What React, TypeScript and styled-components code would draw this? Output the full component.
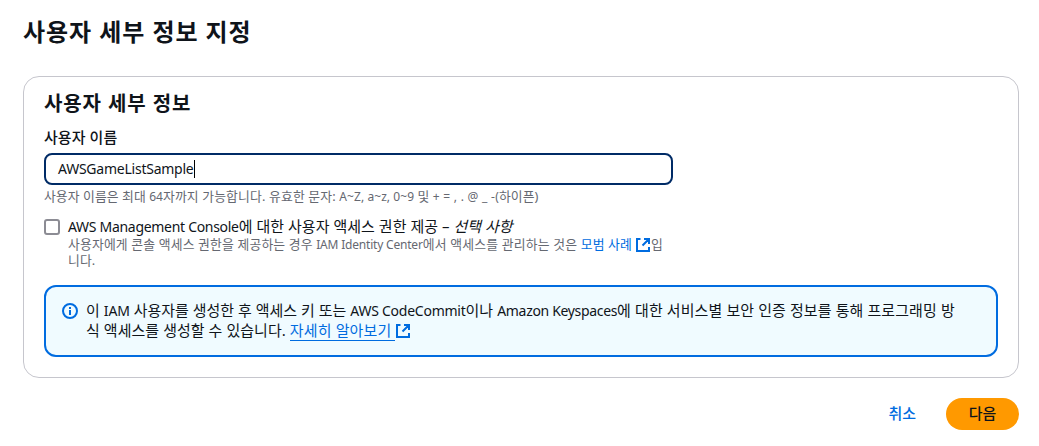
import React from 'react';
import styled, { createGlobalStyle } from 'styled-components';

const GlobalStyle = createGlobalStyle`
  * { box-sizing: border-box; }
  body {
    margin: 0;
    background: #fff;
    color: #0f141a;
    font: 14px/20px "Noto Sans", "Noto Sans CJK KR", sans-serif;
  }
`;

const Page = styled.main`
  width: 1039px;
  height: 446px;
  padding: 17px 20px 0 23px;
  overflow: hidden;
`;

const Run = styled.span<{ $ls?: number }>`
  letter-spacing: ${(p) => p.$ls ?? 0}px;
  white-space: nowrap;
`;

/* Hangul is set slightly larger than the Latin text around it. */
const Ko = styled(Run)<{ $italic?: boolean }>`
  font-size: 1.07em;
  line-height: 1;
  font-style: ${(p) => (p.$italic ? 'italic' : 'normal')};
`;

const Title = styled.h1`
  margin: 0 0 29px;
  height: 30px;
  font-size: 24px;
  line-height: 30px;
  font-weight: 700;
`;

const Card = styled.section`
  height: 302px;
  padding: 15px 20px 0;
  border: 1px solid #c6c6cd;
  border-radius: 16px;
`;

const CardTitle = styled.h2`
  margin: 0 0 12px;
  height: 24px;
  font-size: 20px;
  line-height: 24px;
  font-weight: 700;
`;

const FieldLabel = styled.label`
  display: block;
  height: 20px;
  margin-bottom: 5px;
  font-weight: 500;
`;

const InputBox = styled.div`
  display: flex;
  align-items: center;
  width: 629px;
  height: 32px;
  padding-left: 12px;
  border: 2px solid #002b66;
  border-radius: 8px;
`;

const Caret = styled.i`
  width: 1px;
  height: 18px;
  background: #000;
`;

const Hint = styled.p`
  margin: 4px 0 0;
  height: 16px;
  font-size: 12px;
  line-height: 16px;
  color: #656871;
`;

const CheckRow = styled.div`
  display: flex;
  gap: 8px;
  height: 52px;
  margin-top: 12px;
`;

const Checkbox = styled.span`
  width: 16px;
  height: 16px;
  margin-top: 2px;
  border: 2px solid #8c8c94;
  border-radius: 3px;
`;

const CheckLabel = styled.div`
  height: 20px;
`;

const CheckText = styled.div`
  font-size: 12px;
  line-height: 16px;
  color: #656871;
`;

const Link = styled.a<{ $underlined?: boolean }>`
  display: inline-block;
  height: ${(p) => (p.$underlined ? '19px' : 'auto')};
  padding-right: ${(p) => (p.$underlined ? '4px' : '3px')};
  color: #006ce0;
  white-space: nowrap;
  box-shadow: ${(p) => (p.$underlined ? '0 1px 0 #006ce0' : 'none')};
`;

const Alert = styled.div`
  display: flex;
  gap: 8px;
  height: 72px;
  margin-top: 16px;
  padding: 14px 16px;
  border: 2px solid #006ce0;
  border-radius: 12px;
  background: #f0fbff;
`;

const Icon = styled.svg<{ $shift?: number }>`
  flex: none;
  width: 16px;
  height: 16px;
  vertical-align: ${(p) => p.$shift ?? 0}px;
  fill: none;
  stroke: #006ce0;
  stroke-width: 2;
`;

const InfoIcon = styled(Icon)`
  margin-top: 2px;
`;

const Actions = styled.div`
  display: flex;
  justify-content: flex-end;
  align-items: center;
  gap: 30px;
  margin-top: 20px;
`;

const Button = styled.button<{ $primary?: boolean }>`
  width: ${(p) => (p.$primary ? '73px' : 'auto')};
  height: 32px;
  padding: 0;
  border: 0;
  border-radius: 16px;
  background: ${(p) => (p.$primary ? '#ff9900' : 'transparent')};
  color: ${(p) => (p.$primary ? '#0f141a' : '#006ce0')};
  font: inherit;
  font-weight: 500;
`;

const External = ({ shift }: { shift: number }) => (
  <Icon viewBox="0 0 16 16" $shift={shift}>
    <path d="M5.5 2H2v12h12v-4M9 2h5v5M14 2 7.5 8.5" />
  </Icon>
);

export default function App() {
  return (
    <>
      <GlobalStyle />
      <Page>
        <Title><Run $ls={0.93}>사용자 세부 정보 지정</Run></Title>
        <Card>
          <CardTitle><Run $ls={0.9}>사용자 세부 정보</Run></CardTitle>
          <FieldLabel><Ko $ls={0.1}>사용자 이름</Ko></FieldLabel>
          <InputBox><Run $ls={-0.24}>AWSGameListSample</Run><Caret /></InputBox>
          <Hint>
            <Ko $ls={0.07}>사용자 이름은 최대 </Ko><Run>64</Run><Ko $ls={0.14}>자까지 가능합니다. 유효한 문자: </Ko>
            <Run $ls={0.08}>A~Z, a~z, 0~9 </Run>
            <Ko $ls={0.07}>및 </Ko><Run $ls={0.28}>+ = , . @ _ -(</Run>
            <Ko $ls={0}>하이픈)</Ko>
          </Hint>
          <CheckRow>
            <Checkbox />
            <div>
              <CheckLabel>
                <Run $ls={-0.3}>AWS Management Console</Run><Ko $ls={0.05}>에 대한 사용자 액세스 권한 제공 – </Ko><Ko $ls={0} $italic>선택 사항</Ko>
              </CheckLabel>
              <CheckText>
                <Ko $ls={0.16}>사용자에게 콘솔 액세스 권한을 제공하는 경우 </Ko><Run $ls={-0.2}>IAM Identity Center</Run><Ko $ls={0.2}>에서 액세스를 관리하는 것은 </Ko>
                <Link><Ko $ls={0.1}>모범 사례</Ko></Link><External shift={-4} /><Ko>입</Ko>
                <br />
                <Ko $ls={0.1}>니다.</Ko>
              </CheckText>
            </div>
          </CheckRow>
          <Alert>
            <InfoIcon viewBox="0 0 16 16">
              <circle cx="8" cy="8" r="7" />
              <path d="M8 12V7M8 4v2" />
            </InfoIcon>
            <div>
              <Ko>이 </Ko><Run>IAM </Run><Ko $ls={0.02}>사용자를 생성한 후 액세스 키 또는 </Ko><Run $ls={-0.25}>AWS CodeCommit</Run><Ko $ls={0.1}>이나 </Ko><Run $ls={-0.33}>Amazon Keyspaces</Run><Ko $ls={0.12}>에 대한 서비스별 보안 인증 정보를 통해 프로그래밍 방</Ko>
              <br />
              <Ko $ls={0.07}>식 액세스를 생성할 수 있습니다. </Ko>
              <Link $underlined><Ko $ls={0.15}>자세히 알아보기</Ko></Link><External shift={-3} />
            </div>
          </Alert>
        </Card>
        <Actions>
          <Button><Ko $ls={0}>취소</Ko></Button>
          <Button $primary><Ko $ls={0}>다음</Ko></Button>
        </Actions>
      </Page>
    </>
  );
}
